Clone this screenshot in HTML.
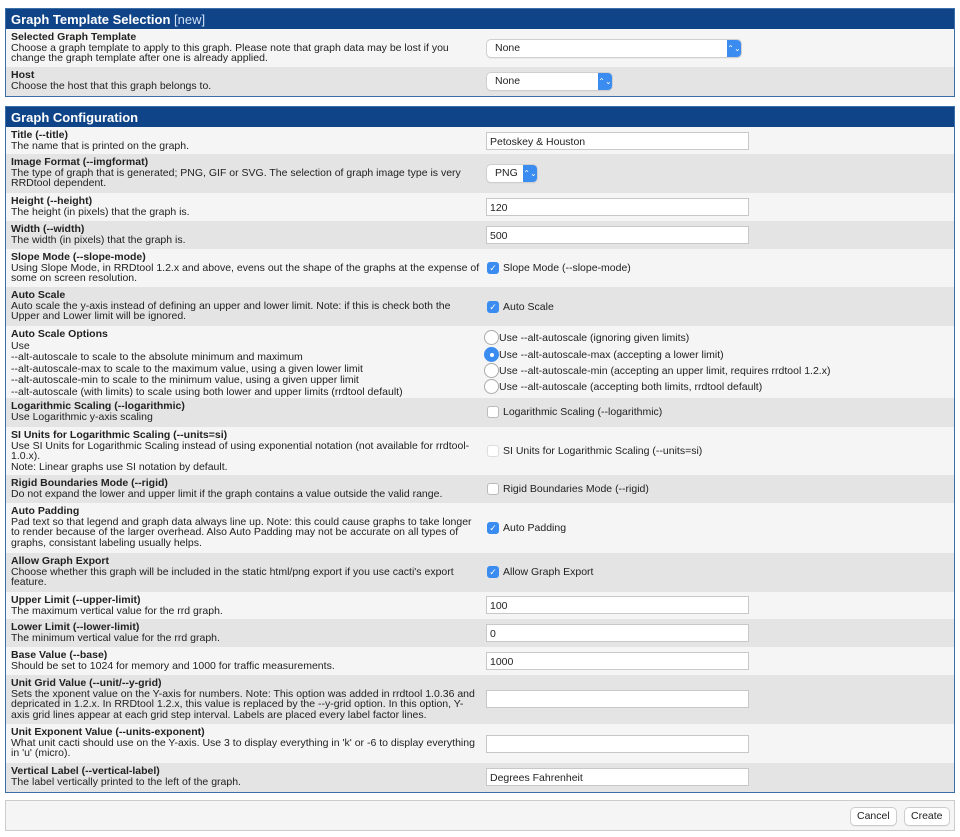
<!DOCTYPE html><html><head><meta charset="utf-8"><style>
*{margin:0;padding:0;box-sizing:border-box}
body{width:960px;height:837px;background:#fff;font-family:"Liberation Sans","DejaVu Sans",sans-serif;font-size:10.5px;color:#222;position:relative;overflow:hidden}
.p{position:absolute;left:5px;width:950px;border:1px solid #3c6ea8;background:#f5f5f5}
.h{position:absolute;left:0;right:0;background:#0f4488;color:#fff;font-weight:bold;font-size:13px;padding:3px 0 0 5px;height:20px}
.h span{font-weight:normal;color:#cfe0f8}
.r{position:absolute;left:0;right:0;background:#f5f5f5}
.r.d{background:#e4e4e4}
.l{position:absolute;left:5px;top:3px;width:470px;line-height:10.5px}
.l b{display:block;font-size:10.5px}
.in{position:absolute;height:18px;width:263px;background:#fff;border:1px solid #c8c8c8;font-size:10.5px;padding:3px 0 0 3px}
.sel{position:absolute;height:17px;background:#fff;border-radius:4px;box-shadow:0 0 0 1px #cfcfcf,0 1px 1px #bbb;font-size:10.5px;padding:2px 0 0 8px}
.sel i{position:absolute;right:0;top:0;width:14px;height:17px;background:#3a8cf0;border-radius:0 4px 4px 0;color:#fff;font-style:normal;font-size:8px;text-align:center;line-height:17px}
.cb{position:absolute;width:12px;height:12px;border-radius:3px;border:1px solid #bbb;background:#fff}
.cb.on{background:#3a8cf0;border-color:#3a8cf0;color:#fff;font-size:9px;line-height:11px;text-align:center}
.lab{position:absolute;font-size:10.5px}
.rd{position:absolute;width:15px;height:15px;border-radius:50%;border:1px solid #aaa;background:#fff}
.rd.on{background:#3a8cf0;border-color:#3a8cf0}
.rd.on:after{content:"";position:absolute;left:4.5px;top:4.5px;width:4px;height:4px;border-radius:50%;background:#fff}
.btn{position:absolute;top:7px;height:17px;background:#fff;border-radius:4px;box-shadow:0 0 0 1px #ccc,0 1px 1px #bbb;font-size:10.5px;padding:2px 6px 0}
</style></head><body>

<div class="p" style="top:8px;height:89px">
<div class="h" style="top:0">Graph Template Selection <span>[new]</span></div>
<div class="r" style="top:20px;height:38px"><div class="l"><b>Selected Graph Template</b>Choose a graph template to apply to this graph. Please note that graph data may be lost if you change the graph template after one is already applied.</div><div class="sel" style="left:481px;top:11px;width:254px">None<i>⌃⌄</i></div></div>
<div class="r d" style="top:58px;height:29px"><div class="l"><b>Host</b>Choose the host that this graph belongs to.</div><div class="sel" style="left:481px;top:6px;width:125px">None<i>⌃⌄</i></div></div>
</div>

<div class="p" style="top:106px;height:687px">
<div class="h" style="top:0">Graph Configuration</div>
<div class="r" style="top:20px;height:27px"><div class="l"><b>Title (--title)</b>The name that is printed on the graph.</div><div class="in" style="left:480px;top:5px">Petoskey &amp; Houston</div></div>
<div class="r d" style="top:47px;height:39px"><div class="l"><b>Image Format (--imgformat)</b>The type of graph that is generated; PNG, GIF or SVG. The selection of graph image type is very RRDtool dependent.</div><div class="sel" style="left:481px;top:11px;width:50px">PNG<i>⌃⌄</i></div></div>
<div class="r" style="top:86px;height:28px"><div class="l"><b>Height (--height)</b>The height (in pixels) that the graph is.</div><div class="in" style="left:480px;top:5px">120</div></div>
<div class="r d" style="top:114px;height:28px"><div class="l"><b>Width (--width)</b>The width (in pixels) that the graph is.</div><div class="in" style="left:480px;top:5px">500</div></div>
<div class="r" style="top:142px;height:38px"><div class="l"><b>Slope Mode (--slope-mode)</b>Using Slope Mode, in RRDtool 1.2.x and above, evens out the shape of the graphs at the expense of some on screen resolution.</div><div class="cb on" style="left:481px;top:13px">✓</div><div class="lab" style="left:497px;top:13px">Slope Mode (--slope-mode)</div></div>
<div class="r d" style="top:180px;height:39px"><div class="l"><b>Auto Scale</b>Auto scale the y-axis instead of defining an upper and lower limit. Note: if this is check both the Upper and Lower limit will be ignored.</div><div class="cb on" style="left:481px;top:14px">✓</div><div class="lab" style="left:497px;top:14px">Auto Scale</div></div>
<div class="r" style="top:219px;height:72px"><div class="l" style="line-height:11.6px"><b>Auto Scale Options</b>Use<br>--alt-autoscale to scale to the absolute minimum and maximum<br>--alt-autoscale-max to scale to the maximum value, using a given lower limit<br>--alt-autoscale-min to scale to the minimum value, using a given upper limit<br>--alt-autoscale (with limits) to scale using both lower and upper limits (rrdtool default)</div>
<div class="rd" style="left:478px;top:4px"></div><div class="lab" style="left:493px;top:6px">Use --alt-autoscale (ignoring given limits)</div>
<div class="rd on" style="left:478px;top:21px"></div><div class="lab" style="left:493px;top:23px">Use --alt-autoscale-max (accepting a lower limit)</div>
<div class="rd" style="left:478px;top:37px"></div><div class="lab" style="left:493px;top:39px">Use --alt-autoscale-min (accepting an upper limit, requires rrdtool 1.2.x)</div>
<div class="rd" style="left:478px;top:53px"></div><div class="lab" style="left:493px;top:55px">Use --alt-autoscale (accepting both limits, rrdtool default)</div></div>
<div class="r d" style="top:291px;height:29px"><div class="l"><b>Logarithmic Scaling (--logarithmic)</b>Use Logarithmic y-axis scaling</div><div class="cb" style="left:481px;top:8px"></div><div class="lab" style="left:497px;top:8px">Logarithmic Scaling (--logarithmic)</div></div>
<div class="r" style="top:320px;height:48px"><div class="l"><b>SI Units for Logarithmic Scaling (--units=si)</b>Use SI Units for Logarithmic Scaling instead of using exponential notation (not available for rrdtool-1.0.x).<br>Note: Linear graphs use SI notation by default.</div><div class="cb" style="left:481px;top:18px;border-color:#ddd"></div><div class="lab" style="left:497px;top:18px">SI Units for Logarithmic Scaling (--units=si)</div></div>
<div class="r d" style="top:368px;height:28px"><div class="l"><b>Rigid Boundaries Mode (--rigid)</b>Do not expand the lower and upper limit if the graph contains a value outside the valid range.</div><div class="cb" style="left:481px;top:8px"></div><div class="lab" style="left:497px;top:8px">Rigid Boundaries Mode (--rigid)</div></div>
<div class="r" style="top:396px;height:50px"><div class="l"><b>Auto Padding</b>Pad text so that legend and graph data always line up. Note: this could cause graphs to take longer to render because of the larger overhead. Also Auto Padding may not be accurate on all types of graphs, consistant labeling usually helps.</div><div class="cb on" style="left:481px;top:19px">✓</div><div class="lab" style="left:497px;top:19px">Auto Padding</div></div>
<div class="r d" style="top:446px;height:39px"><div class="l"><b>Allow Graph Export</b>Choose whether this graph will be included in the static html/png export if you use cacti's export feature.</div><div class="cb on" style="left:481px;top:13px">✓</div><div class="lab" style="left:497px;top:13px">Allow Graph Export</div></div>
<div class="r" style="top:485px;height:27px"><div class="l"><b>Upper Limit (--upper-limit)</b>The maximum vertical value for the rrd graph.</div><div class="in" style="left:480px;top:4px">100</div></div>
<div class="r d" style="top:512px;height:28px"><div class="l"><b>Lower Limit (--lower-limit)</b>The minimum vertical value for the rrd graph.</div><div class="in" style="left:480px;top:5px">0</div></div>
<div class="r" style="top:540px;height:28px"><div class="l"><b>Base Value (--base)</b>Should be set to 1024 for memory and 1000 for traffic measurements.</div><div class="in" style="left:480px;top:5px">1000</div></div>
<div class="r d" style="top:568px;height:49px"><div class="l"><b>Unit Grid Value (--unit/--y-grid)</b>Sets the xponent value on the Y-axis for numbers. Note: This option was added in rrdtool 1.0.36 and depricated in 1.2.x. In RRDtool 1.2.x, this value is replaced by the --y-grid option. In this option, Y-axis grid lines appear at each grid step interval. Labels are placed every label factor lines.</div><div class="in" style="left:480px;top:15px"></div></div>
<div class="r" style="top:617px;height:39px"><div class="l"><b>Unit Exponent Value (--units-exponent)</b>What unit cacti should use on the Y-axis. Use 3 to display everything in 'k' or -6 to display everything in 'u' (micro).</div><div class="in" style="left:480px;top:11px"></div></div>
<div class="r d" style="top:656px;height:29px"><div class="l"><b>Vertical Label (--vertical-label)</b>The label vertically printed to the left of the graph.</div><div class="in" style="left:480px;top:5px">Degrees Fahrenheit</div></div>
</div>

<div style="position:absolute;left:5px;top:800px;width:950px;height:31px;border:1px solid #ccc;background:#f5f5f5">
<div class="btn" style="left:845px">Cancel</div><div class="btn" style="left:899px">Create</div></div>
</body></html>
